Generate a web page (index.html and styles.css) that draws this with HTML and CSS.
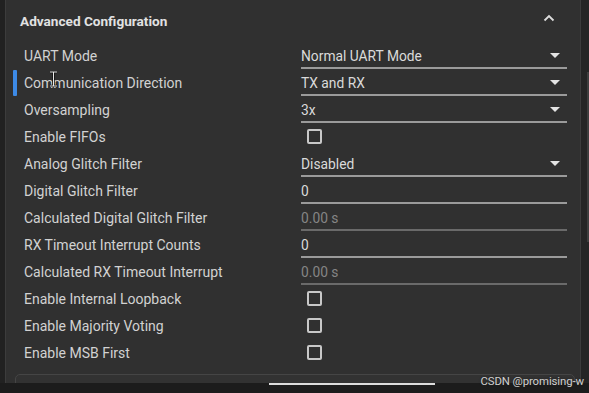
FILE: index.html
```html
<!DOCTYPE html>
<html lang="en">
<head>
    <meta charset="UTF-8">
    <title>Advanced Configuration</title>
    <link rel="stylesheet" href="styles.css">
</head>
<body>
    <div class="screen">
        <div class="side-strip"></div>
        <div class="panel">
            <div class="section-header">
                <span class="section-title">Advanced Configuration</span>
                <svg class="chevron" width="12" height="8" viewBox="0 0 12 8">
                    <path d="M1.5 6.5 L6 2 L10.5 6.5" fill="none" stroke="#dcdcdc" stroke-width="1.8"/>
                </svg>
            </div>

            <div class="rows">
                <div class="row">
                    <label class="row-label">UART Mode</label>
                    <div class="field select"><span>Normal UART Mode</span><i class="caret"></i></div>
                </div>
                <div class="row active">
                    <label class="row-label">Communication Direction</label>
                    <div class="field select"><span>TX and RX</span><i class="caret"></i></div>
                </div>
                <div class="row">
                    <label class="row-label">Oversampling</label>
                    <div class="field select"><span>3x</span><i class="caret"></i></div>
                </div>
                <div class="row">
                    <label class="row-label">Enable FIFOs</label>
                    <div class="check-cell"><span class="checkbox"></span></div>
                </div>
                <div class="row">
                    <label class="row-label">Analog Glitch Filter</label>
                    <div class="field select"><span>Disabled</span><i class="caret"></i></div>
                </div>
                <div class="row">
                    <label class="row-label">Digital Glitch Filter</label>
                    <div class="field"><span>0</span></div>
                </div>
                <div class="row">
                    <label class="row-label">Calculated Digital Glitch Filter</label>
                    <div class="field readonly"><span>0.00 s</span></div>
                </div>
                <div class="row">
                    <label class="row-label">RX Timeout Interrupt Counts</label>
                    <div class="field"><span>0</span></div>
                </div>
                <div class="row">
                    <label class="row-label">Calculated RX Timeout Interrupt</label>
                    <div class="field readonly"><span>0.00 s</span></div>
                </div>
                <div class="row">
                    <label class="row-label">Enable Internal Loopback</label>
                    <div class="check-cell"><span class="checkbox"></span></div>
                </div>
                <div class="row">
                    <label class="row-label">Enable Majority Voting</label>
                    <div class="check-cell"><span class="checkbox"></span></div>
                </div>
                <div class="row">
                    <label class="row-label">Enable MSB First</label>
                    <div class="check-cell"><span class="checkbox"></span></div>
                </div>
            </div>

            <div class="next-card"></div>
        </div>
        <div class="scrollbar"><div class="thumb"></div></div>

        <!-- mouse text cursor -->
        <svg class="ibeam" width="9" height="16" viewBox="0 0 9 16">
            <path d="M1 1 H8 M4.5 1 V15 M1 15 H8" fill="none" stroke="#111" stroke-width="2.4"/>
            <path d="M1 1 H8 M4.5 1 V15 M1 15 H8" fill="none" stroke="#e8e8e8" stroke-width="1"/>
        </svg>
    </div>
    <div class="taskbar"><div class="task-line"></div></div>
    <div class="watermark">CSDN @promising-w</div>
</body>
</html>
```

FILE: styles.css
```css
html, body {
    margin: 0;
    padding: 0;
}
body {
    width: 589px;
    height: 393px;
    overflow: hidden;
    background-color: #1f1f1f;
    font-family: Roboto, "Liberation Sans", sans-serif;
    color: #d6d6d6;
    position: relative;
}
.screen {
    display: flex;
    height: 383px;
    position: relative;
}
.side-strip {
    width: 5px;
    background-color: #212121;
}
.panel {
    flex: 1;
    background-color: #303030;
    border-left: 1px solid #3c3c3c;
    border-right: 1px solid #3c3c3c;
    overflow: hidden;
}
.section-header {
    height: 41px;
    display: flex;
    align-items: center;
    justify-content: space-between;
    padding: 0 25px 0 14px;
}
.section-title {
    font-weight: bold;
    font-size: 13.6px;
    color: #e2e2e2;
}
.chevron {
    margin-top: -5px;
}
.rows {
    display: flex;
    flex-direction: column;
    position: relative;
    padding-top: 1px;
}
.row {
    height: 27px;
    display: flex;
    align-items: center;
    padding: 0 13px 0 18px;
    position: relative;
}
.row.active::before {
    content: "";
    position: absolute;
    left: 7px;
    top: 1px;
    width: 4px;
    height: 26px;
    border-radius: 1px;
    background-color: #3d8ae6;
}
.row-label {
    width: 277px;
    font-size: 14px;
    color: #d2d2d2;
}
.field {
    flex: 1;
    height: 22px;
    margin-top: 2px;
    display: flex;
    align-items: center;
    justify-content: space-between;
    border-bottom: 2px solid #9a9a9a;
    font-size: 13.8px;
    color: #dadada;
    padding-right: 7px;
}
.field.readonly {
    color: #858585;
    border-bottom: 2px solid #6a6a6a;
}
.caret {
    width: 0;
    height: 0;
    border-left: 5px solid transparent;
    border-right: 5px solid transparent;
    border-top: 5px solid #e4e4e4;
}
.check-cell {
    flex: 1;
    display: flex;
    align-items: center;
    padding-left: 6px;
}
.checkbox {
    width: 11px;
    height: 11px;
    border: 2px solid #c8c8c8;
    border-radius: 2px;
}
.next-card {
    margin: 8px 5px 0 9px;
    height: 40px;
    border: 1px solid #454545;
    border-radius: 5px;
    background-color: #323232;
}
.scrollbar {
    width: 8px;
    background-color: #252525;
    position: relative;
}
.thumb {
    position: absolute;
    right: 0;
    top: 72px;
    width: 2px;
    height: 170px;
    background-color: #3e3e3e;
}
.ibeam {
    position: absolute;
    left: 49px;
    top: 71px;
}
.taskbar {
    height: 10px;
    background-color: #1c1c1c;
    position: relative;
}
.task-line {
    position: absolute;
    left: 269px;
    top: 0;
    width: 166px;
    height: 2px;
    background-color: #dcdcdc;
}
.watermark {
    position: absolute;
    right: 5px;
    bottom: 5px;
    font-family: Roboto, "Liberation Sans", sans-serif;
    font-size: 11.4px;
    letter-spacing: -0.1px;
    color: #d0d0d0;
    text-shadow: 0 0 2px #1c1c1c;
}
```
